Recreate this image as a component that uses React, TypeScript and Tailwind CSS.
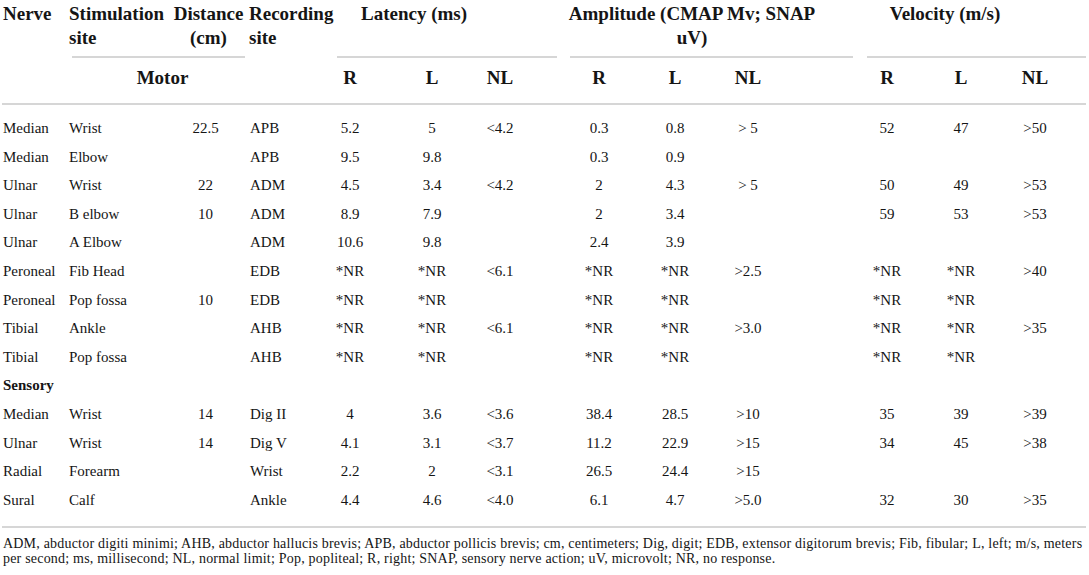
const GRID =
  'grid grid-cols-[66px_100px_79px_75px_60px_22px_60px_8px_60px_39px_60px_16px_60px_13px_60px_79px_60px_14px_60px_14px_60px_1fr]';

const motor: string[][] = [
  ['Median', 'Wrist', '22.5', 'APB', '5.2', '5', '<4.2', '0.3', '0.8', '> 5', '52', '47', '>50'],
  ['Median', 'Elbow', '', 'APB', '9.5', '9.8', '', '0.3', '0.9', '', '', '', ''],
  ['Ulnar', 'Wrist', '22', 'ADM', '4.5', '3.4', '<4.2', '2', '4.3', '> 5', '50', '49', '>53'],
  ['Ulnar', 'B elbow', '10', 'ADM', '8.9', '7.9', '', '2', '3.4', '', '59', '53', '>53'],
  ['Ulnar', 'A Elbow', '', 'ADM', '10.6', '9.8', '', '2.4', '3.9', '', '', '', ''],
  ['Peroneal', 'Fib Head', '', 'EDB', '*NR', '*NR', '<6.1', '*NR', '*NR', '>2.5', '*NR', '*NR', '>40'],
  ['Peroneal', 'Pop fossa', '10', 'EDB', '*NR', '*NR', '', '*NR', '*NR', '', '*NR', '*NR', ''],
  ['Tibial', 'Ankle', '', 'AHB', '*NR', '*NR', '<6.1', '*NR', '*NR', '>3.0', '*NR', '*NR', '>35'],
  ['Tibial', 'Pop fossa', '', 'AHB', '*NR', '*NR', '', '*NR', '*NR', '', '*NR', '*NR', ''],
];

const sensory: string[][] = [
  ['Median', 'Wrist', '14', 'Dig II', '4', '3.6', '<3.6', '38.4', '28.5', '>10', '35', '39', '>39'],
  ['Ulnar', 'Wrist', '14', 'Dig V', '4.1', '3.1', '<3.7', '11.2', '22.9', '>15', '34', '45', '>38'],
  ['Radial', 'Forearm', '', 'Wrist', '2.2', '2', '<3.1', '26.5', '24.4', '>15', '', '', ''],
  ['Sural', 'Calf', '', 'Ankle', '4.4', '4.6', '<4.0', '6.1', '4.7', '>5.0', '32', '30', '>35'],
];

const Line = ({ className = '' }: { className?: string }) => (
  <div className={`h-[2px] bg-[#d6d6d6] ${className}`} />
);

function DataRow({ r }: { r: string[] }) {
  return (
    <div className={`${GRID} h-[28.6px] items-center whitespace-nowrap`}>
      <div className="pl-[3px]">{r[0]}</div>
      <div className="pl-[3px]">{r[1]}</div>
      <div className="text-center">{r[2]}</div>
      <div className="pl-[5px]">{r[3]}</div>
      {r.slice(4).map((v, i) => [
        <div key={`v${i}`} className="text-center">
          {v}
        </div>,
        <div key={`s${i}`} />,
      ])}
    </div>
  );
}

export default function App() {
  const subCols = ['R', 'L', 'NL', 'R', 'L', 'NL', 'R', 'L', 'NL'];

  return (
    <div className="w-[1089px] h-[575px] bg-white text-[#151515] font-['Liberation_Serif',serif] overflow-hidden">
      {/* header */}
      <div className="text-[19px] font-bold leading-[24px]">
        <div className={`${GRID} pt-[2px] h-[56px]`}>
          <div className="pl-[3px]">Nerve</div>
          <div className="pl-[3px]">Stimulation site</div>
          <div className="text-center pl-[6px] whitespace-nowrap">
            Distance
            <br />
            (cm)
          </div>
          <div className="pl-[4px]">Recording site</div>
          <div className="col-span-6">
            <div className="w-[188px] text-center">Latency (ms)</div>
          </div>
          <div className="col-span-6">
            <div className="w-[274px] ml-[-14px] text-center">Amplitude (CMAP Mv; SNAP uV)</div>
          </div>
          <div className="col-span-6">
            <div className="w-[176px] text-center">Velocity (m/s)</div>
          </div>
        </div>
        <div className={GRID}>
          <div />
          <div className="col-span-2 pl-[6px]">
            <Line />
          </div>
          <div />
          <div className="col-span-6 pl-[17px] pr-[12px]">
            <Line />
          </div>
          <div className="col-span-6 pl-[1px] pr-[4px]">
            <Line />
          </div>
          <div className="col-span-6 pl-[10px] pr-[3px]">
            <Line />
          </div>
        </div>
        <div className={`${GRID} pt-[8px] pb-[13px]`}>
          <div />
          <div className="col-span-2 text-center pl-[14px]">Motor</div>
          <div />
          {subCols.map((c, i) => [
            <div key={`h${i}`} className="text-center">
              {c}
            </div>,
            <div key={`hs${i}`} />,
          ])}
        </div>
        <Line className="ml-[2px] mr-[3px]" />
      </div>

      {/* body */}
      <div className="text-[15px] pt-[9px] pb-[12px]">
        {motor.map((r, i) => (
          <DataRow key={`m${i}`} r={r} />
        ))}
        <div className="h-[28.6px] flex items-center pl-[3px] font-bold">Sensory</div>
        {sensory.map((r, i) => (
          <DataRow key={`s${i}`} r={r} />
        ))}
      </div>
      <Line className="ml-[2px] mr-[3px]" />

      {/* footnote */}
      <p className="pt-[8px] pl-[3px] text-[14px] leading-[15px] tracking-[0.2px] whitespace-nowrap">
        ADM, abductor digiti minimi; AHB, abductor hallucis brevis; APB, abductor pollicis brevis; cm, centimeters;
        Dig, digit; EDB, extensor digitorum brevis; Fib, fibular; L, left; m/s, meters
        <br />
        per second; ms, millisecond; NL, normal limit; Pop, popliteal; R, right; SNAP, sensory nerve action; uV,
        microvolt; NR, no response.
      </p>
    </div>
  );
}
